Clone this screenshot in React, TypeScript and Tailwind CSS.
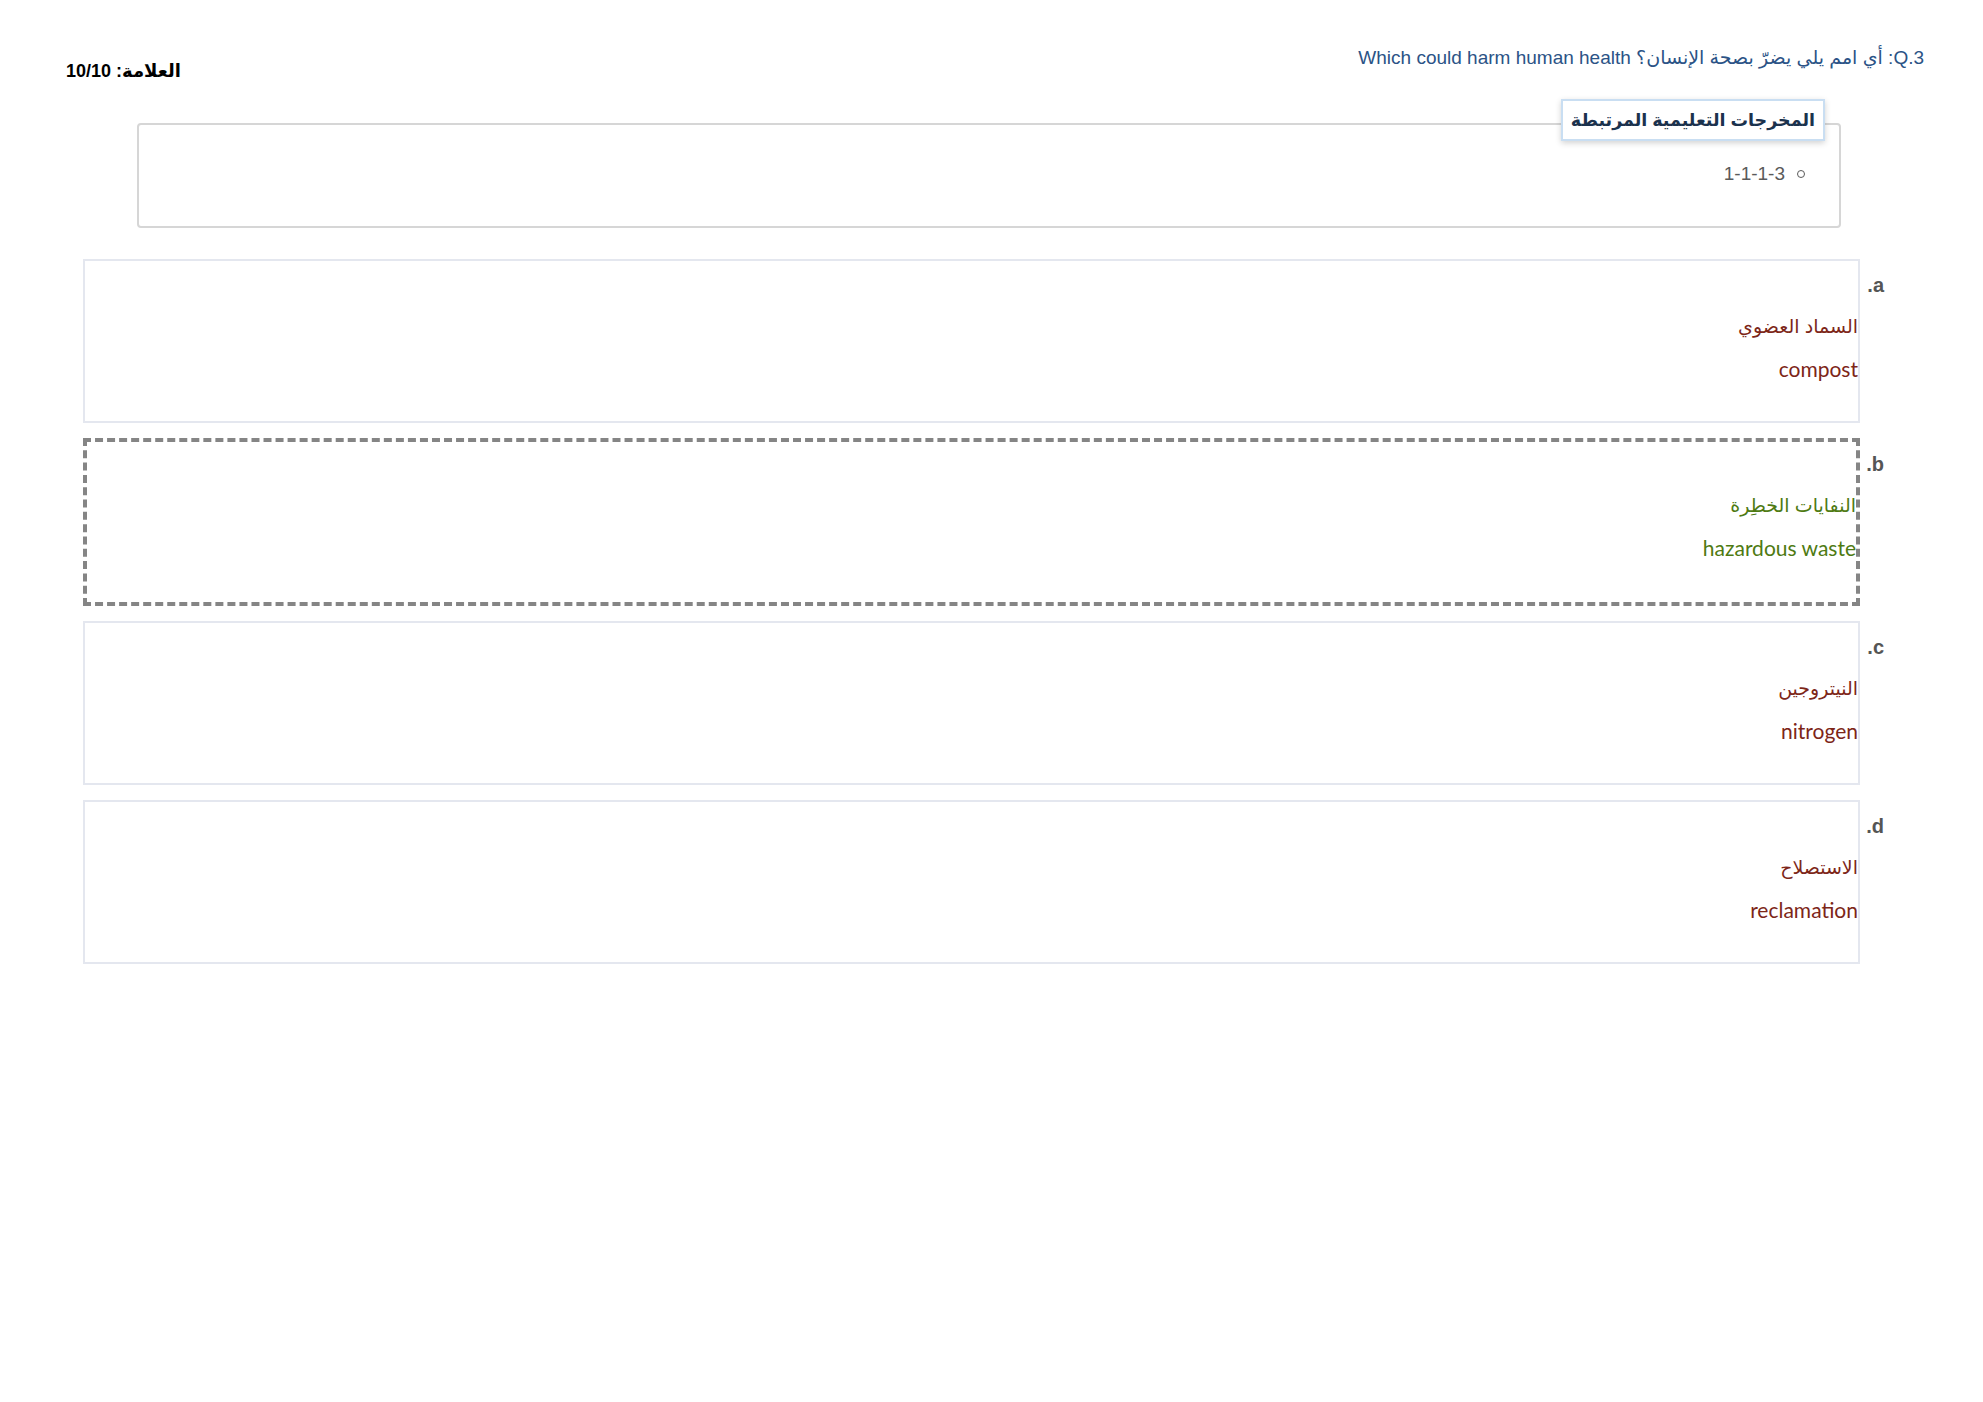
import React from 'react';

interface Option {
  key: string;
  ar: string;
  en: string;
  selected?: boolean;
}

const options: Option[] = [
  { key: 'a.', ar: 'السماد العضوي', en: 'compost' },
  { key: 'b.', ar: 'النفايات  الخطِرة', en: 'hazardous waste', selected: true },
  { key: 'c.', ar: 'النيتروجين', en: 'nitrogen' },
  { key: 'd.', ar: 'الاستصلاح', en: 'reclamation' },
];

const App: React.FC = () => {
  return (
    <div dir="rtl" className="min-h-screen w-full bg-white font-['Liberation_Sans',_'DejaVu_Sans',_sans-serif]">
      {/* header */}
      <div className="flex items-start justify-between pt-[46px] pr-[59px] pl-[66px]">
        <p className="text-[19px] leading-[24px] text-[#2b5386]">
          Q.3: أي امم يلي يضرّ بصحة الإنسان؟ Which could harm human health
        </p>
        <p className="mt-[13px] text-[18px] leading-[24px] font-bold text-black">العلامة: 10/10</p>
      </div>

      {/* learning outcomes */}
      <div className="relative mt-[40px] mr-[142px] ml-[137px] h-[105px] rounded-[4px] border-2 border-[#d6d6d6]">
        <div className="absolute -top-[26px] right-[14px] h-[42px] border-2 border-[#c9def2] bg-white px-[8px] shadow-[0_2px_6px_rgba(0,0,0,0.18)]">
          <span className="text-[17.5px] leading-[38px] font-bold text-[#1b324d]">المخرجات التعليمية المرتبطة</span>
        </div>
        <div className="flex items-center gap-[12px] pt-[37px] pr-[34px]">
          <span className="h-[8px] w-[8px] rounded-full border-[1.5px] border-[#5a5a5a]" />
          <span className="text-[19px] leading-[24px] text-[#5a5a5a]">1-1-1-3</span>
        </div>
      </div>

      {/* options */}
      <div className="mt-[31px] flex flex-col gap-[15px] pr-[99px] pl-[83px]">
        {options.map((o) => (
          <div key={o.key} className="flex items-start">
            <div className="ml-[9px] mt-[14px] w-[15px] text-[20px] leading-[24px] font-bold text-[#555]">{o.key}</div>
            <div
              className={
                o.selected
                  ? 'h-[168px] flex-1 border-4 border-dashed border-[#858585] pt-[47px]'
                  : 'h-[164px] flex-1 border-2 border-[#e4e7ef] pt-[49px]'
              }
            >
              <div
                className={
                  'text-[19px] leading-[34px] ' + (o.selected ? 'text-[#4e7a12]' : 'text-[#7d2618]')
                }
              >
                {o.ar}
              </div>
              <div
                className={
                  "mt-[8px] font-['Lato',_sans-serif] text-[21px] leading-[34px] " +
                  (o.selected ? 'text-[#4e7a12]' : 'text-[#7d2618]')
                }
              >
                {o.en}
              </div>
            </div>
          </div>
        ))}
      </div>
    </div>
  );
};

export default App;
